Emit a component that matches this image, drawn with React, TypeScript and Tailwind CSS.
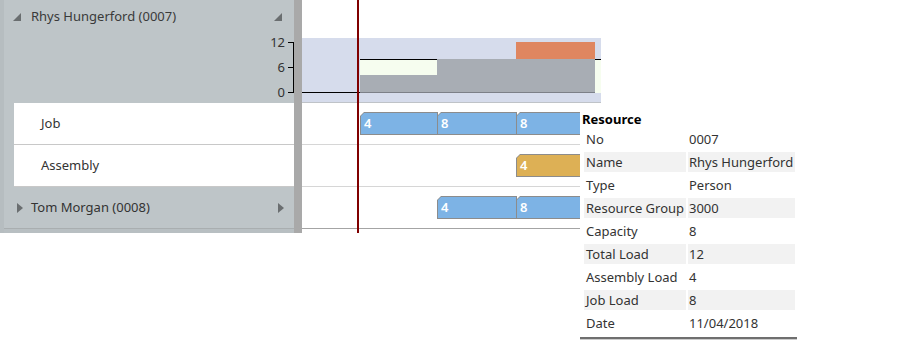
import React from "react";

const font = { fontFamily: '"Noto Sans", "Open Sans", sans-serif' };

function Bar({ width, color, label }: { width: number; color: string; label: string }) {
  return (
    <div
      className="-ml-px h-[23px] shrink-0 bg-[#8c8c8c] p-px first:ml-0 [clip-path:polygon(4px_0,100%_0,100%_100%,0_100%,0_4px)]"
      style={{ width }}
    >
      <div
        className="h-full pl-[3px] text-[13px] font-semibold leading-[21px] text-white [clip-path:polygon(3px_0,100%_0,100%_100%,0_100%,0_3px)]"
        style={{ background: color }}
      >
        {label}
      </div>
    </div>
  );
}

function DownTri() {
  return (
    <svg width="8" height="8" viewBox="0 0 8 8">
      <polygon points="8,0 8,8 0,8" fill="#6a6e70" />
    </svg>
  );
}

function RightTri() {
  return (
    <svg width="6" height="10" viewBox="0 0 6 10">
      <polygon points="0,0 6,5 0,10" fill="#6a6e70" />
    </svg>
  );
}

const rows: [string, string][] = [
  ["No", "0007"],
  ["Name", "Rhys Hungerford"],
  ["Type", "Person"],
  ["Resource Group", "3000"],
  ["Capacity", "8"],
  ["Total Load", "12"],
  ["Assembly Load", "4"],
  ["Job Load", "8"],
  ["Date", "11/04/2018"],
];

export default function App() {
  return (
    <div className="relative h-[351px] w-[903px] overflow-hidden bg-white text-[13px] text-[#333]" style={font}>
      <div className="flex">
        {/* left resource panel */}
        <div className="w-[294px] border-l-4 border-[#b6bdc0] bg-[#bec5c8]">
          <div className="flex h-[103px] flex-col">
            <div className="flex h-[30px] shrink-0 items-center pl-[9px] pr-[12px] pt-[4px]">
              <DownTri />
              <span className="ml-[10px] flex-1 text-[#3a3a3a]">Rhys Hungerford (0007)</span>
              <DownTri />
            </div>
            {/* load axis */}
            <div className="flex shrink-0 items-start justify-end">
              <div className="flex flex-col items-end">
                {["12", "6", "0"].map((v) => (
                  <div key={v} className="flex h-[25px] items-center leading-none">
                    <span>{v}</span>
                    <span className="ml-[3px] h-px w-[5px] bg-black" />
                  </div>
                ))}
              </div>
              <div className="mt-[12px] h-[51px] w-px bg-black" />
            </div>
          </div>
          <div className="ml-[10px] flex h-[42px] items-center border-b border-[#c8c8c8] bg-white pl-[27px]">Job</div>
          <div className="ml-[10px] flex h-[42px] items-center border-b border-[#c8c8c8] bg-white pl-[27px]">Assembly</div>
          <div className="flex h-[42px] items-center border-b border-[#a9aeb0] pl-[13px] pr-[10px]">
            <RightTri />
            <span className="ml-[8px] flex-1">Tom Morgan (0008)</span>
            <RightTri />
          </div>
          <div className="h-[4px] bg-[#b8bfc2]" />
        </div>
        <div className="h-[233px] w-[8px] bg-[#a9a9a9]" />

        {/* gantt area */}
        <div className="w-[299px]">
          <div className="h-[38px]" />
          {/* load histogram */}
          <div className="h-[64px] bg-[#d6dcec]">
            <div className="flex h-[55px] items-end">
              <div className="h-px w-[58px] bg-black" />
              <div className="flex w-[77px] flex-col">
                <div className="h-[16px] border-t border-black bg-[#f6fdef]" />
                <div className="h-[17px] bg-[#a8adb4]" />
                <div className="h-px bg-[#7c8088]" />
              </div>
              <div className="flex w-[79px] flex-col">
                <div className="h-[33px] bg-[#a8adb4]" />
                <div className="h-px bg-[#7c8088]" />
              </div>
              <div className="flex w-[79px] flex-col">
                <div className="h-[17px] bg-[#df8660]" />
                <div className="h-[33px] bg-[#a8adb4]" />
                <div className="h-px bg-[#7c8088]" />
              </div>
              <div className="h-[34px] w-[6px] border-t border-black bg-[#f6fdef]" />
            </div>
          </div>
          <div className="h-px bg-[#bfc3c8]" />
          <div className="flex h-[42px] border-b border-[#d6d6d6] pl-[58px] pt-[9px]">
            <Bar width={78} color="#7db3e5" label="4" />
            <Bar width={80} color="#7db3e5" label="8" />
            <Bar width={80} color="#7db3e5" label="8" />
          </div>
          <div className="flex h-[42px] border-b border-[#d6d6d6] pl-[214px] pt-[9px]">
            <Bar width={80} color="#ddb055" label="4" />
          </div>
          <div className="flex h-[42px] border-b border-[#a4a4a4] pl-[135px] pt-[9px]">
            <Bar width={80} color="#7db3e5" label="4" />
            <Bar width={80} color="#7db3e5" label="8" />
          </div>
        </div>
      </div>

      {/* current date marker */}
      <div className="absolute left-[357px] top-0 h-[233px] w-[2px] bg-[#800000]" />

      {/* tooltip */}
      <div className="absolute left-[580px] top-[108px] w-[217px] border-b-2 border-[#6f6f6f] bg-white pb-[1px] shadow-[0_1px_0_rgba(0,0,0,0.2)]">
        <div className="h-[21px] pl-[2px] pt-[1px] font-bold leading-[20px] text-black">Resource</div>
        {rows.map(([k, v], i) => (
          <div key={k} className="flex h-[23px] gap-[2px] pl-[4px]">
            <div className={`h-[20px] w-[102px] pl-[2px] leading-[20px] ${i % 2 ? "bg-[#f2f2f2]" : ""}`}>{k}</div>
            <div className={`h-[20px] w-[107px] pl-[1px] leading-[20px] ${i % 2 ? "bg-[#f2f2f2]" : ""}`}>{v}</div>
          </div>
        ))}
      </div>
    </div>
  );
}
